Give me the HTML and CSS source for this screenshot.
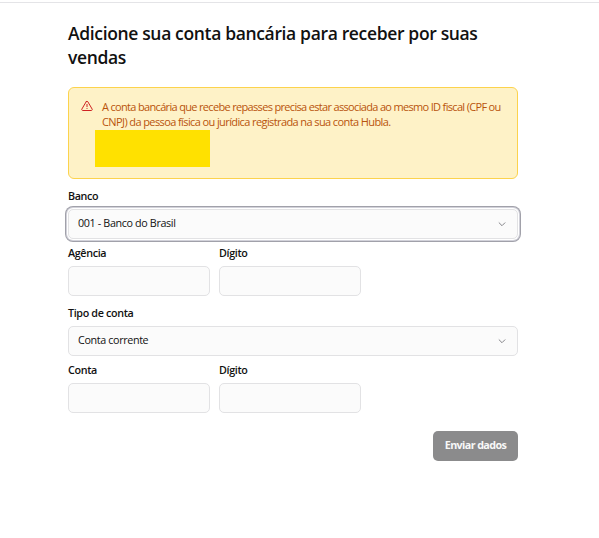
FILE: index.html
```html
<!DOCTYPE html>
<html lang="pt-BR">
<head>
<meta charset="utf-8">
<title>Conta bancária</title>
<link rel="stylesheet" href="styles.css">
</head>
<body>
<main class="page">
<h1 class="title">Adicione sua conta bancária para receber por suas<br>vendas</h1>
<section class="alert">
<svg class="warn" viewBox="0 0 12 12" fill="none" stroke="#cf2222" stroke-linecap="round" stroke-linejoin="round"><path d="M5.2 1.7.9 9a.95.95 0 0 0 .8 1.5h8.6a.95.95 0 0 0 .8-1.5L6.8 1.7a.95.95 0 0 0-1.6 0ZM6 4.4v2.3M6 8.5v.1"/></svg>
<div class="alert-body"><p class="alert-text">A conta bancária que recebe repasses precisa estar associada ao mesmo ID fiscal (CPF ou<br><span class="second">CNPJ) da pessoa física ou jurídica registrada na sua conta Hubla.</span></p><div class="mark"></div></div>
</section>
<form class="form">
<div class="field"><label>Banco</label><div class="control select focused"><span>001 - Banco do Brasil</span><svg class="chev" viewBox="0 0 10 10"><path d="M1.8 3.5 5 6.7l3.2-3.2"/></svg></div></div>
<div class="row"><div class="field"><label>Agência</label><div class="control"></div></div><div class="field"><label>Dígito</label><div class="control"></div></div></div>
<div class="field"><label>Tipo de conta</label><div class="control select"><span>Conta corrente</span><svg class="chev" viewBox="0 0 10 10"><path d="M1.8 3.5 5 6.7l3.2-3.2"/></svg></div></div>
<div class="row"><div class="field"><label>Conta</label><div class="control"></div></div><div class="field"><label>Dígito</label><div class="control"></div></div></div>
<button class="submit" type="button">Enviar dados</button>
</form>
</main>
</body>
</html>
```
FILE: styles.css
```css
* { box-sizing: border-box; }
body { display: flow-root; margin: 0; background: #fff; color: #111; font-family: "Open Sans", "Noto Sans", sans-serif; }
.page { height: 536px; border-top: 1px solid #e4e4e7; margin-top: 2px; padding: 18px 81px 0 68px; }
.title { margin: 0; font-size: 17.5px; line-height: 24px; font-weight: 560; white-space: nowrap; letter-spacing: -.35px; }
.alert { display: flex; gap: 9px; width: 450px; height: 92px; margin-top: 18px; padding: 12px; border: 1px solid #fcd34d; border-radius: 6px; background: #fef2c7; }
.warn { width: 12px; height: 12px; flex: none; }
.alert-text { margin: -1px 0 1px; color: #b9540c; font-size: 11px; line-height: 15px; font-weight: 500; white-space: nowrap; letter-spacing: -.67px; }
.second { letter-spacing: -.6px; }
.mark { width: 115px; height: 37px; margin: 0 0 0 -7px; background: #ffe100; }
.form { display: flex; flex-direction: column; width: 450px; margin-top: 9px; }
label { display: block; height: 21px; font-size: 10.75px; line-height: 16px; font-weight: 600; letter-spacing: -.35px; }
.control { height: 30px; border: 1px solid #e2e2e4; border-radius: 5px; background: #fbfbfb; }
.select { display: flex; align-items: center; justify-content: space-between; padding: 0 10px 0 9px; font-size: 10.75px; letter-spacing: -.36px; }
.select span { margin-bottom: 3px; }
.focused { box-shadow: 0 0 0 1px #fff, 0 0 0 2px #d2d2da, 0 0 0 3px #a1a1aa; }
.field { margin-bottom: 6px; }
.row { display: grid; grid-template-columns: 142px 142px; gap: 9px; margin-bottom: 3px; }
.chev { width: 10px; height: 10px; fill: none; stroke: #85858a; }
.submit { align-self: flex-end; width: 85px; height: 30px; margin-top: 9px; padding: 0 0 2px; border: 0; border-radius: 5px; background: #8b8b8c; color: #f8f8f8; font: 700 10.75px/16px "Open Sans", sans-serif; letter-spacing: -.6px; }
```
